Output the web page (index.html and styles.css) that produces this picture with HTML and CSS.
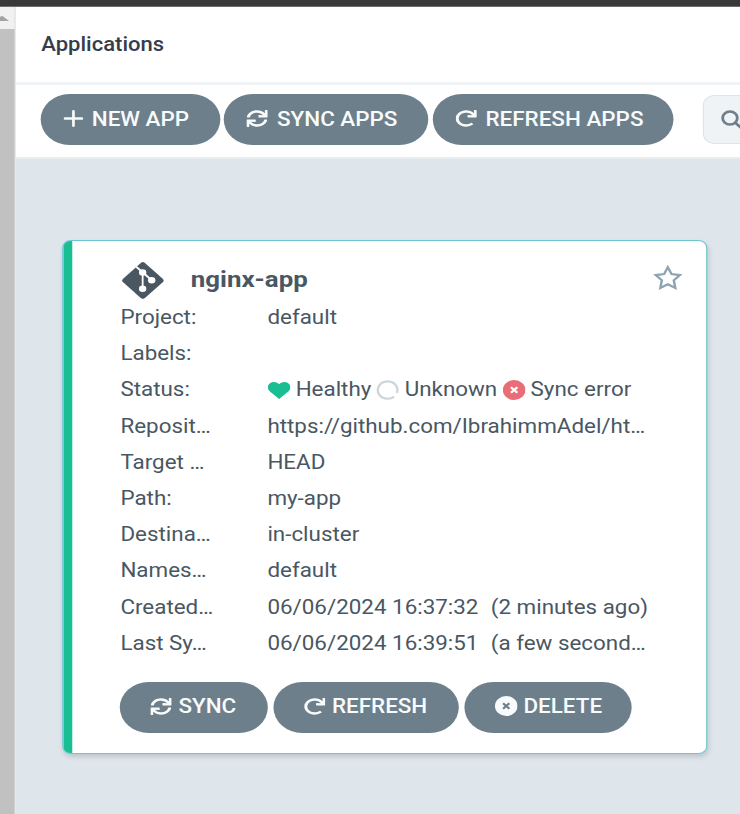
FILE: index.html
```html
<!DOCTYPE html>
<html lang="en">
<head>
<meta charset="utf-8">
<title>Applications</title>
<link rel="stylesheet" href="styles.css">
</head>
<body>
<svg class="defs" aria-hidden="true">
  <symbol id="sync" viewBox="0 0 512 512" preserveAspectRatio="none"><path d="M440.65 12.57l4 82.77A247.16 247.16 0 0 0 255.83 8C134.73 8 33.91 94.92 12.29 209.82A12 12 0 0 0 24.09 224h49.05a12 12 0 0 0 11.67-9.26 175.91 175.91 0 0 1 317-56.94l-101.46-4.86a12 12 0 0 0-12.57 12v47.41a12 12 0 0 0 12 12H500a12 12 0 0 0 12-12V12a12 12 0 0 0-12-12h-47.37a12 12 0 0 0-11.98 12.57zM255.83 432a175.61 175.61 0 0 1-146-77.8l101.8 4.87a12 12 0 0 0 12.57-12v-47.4a12 12 0 0 0-12-12H12a12 12 0 0 0-12 12V500a12 12 0 0 0 12 12h47.35a12 12 0 0 0 12-12.6l-4.15-82.57A247.17 247.17 0 0 0 255.83 504c121.11 0 221.93-86.92 243.55-201.82a12 12 0 0 0-11.8-14.18h-49.05a12 12 0 0 0-11.67 9.26A175.86 175.86 0 0 1 255.83 432z"/></symbol>
  <symbol id="redo" viewBox="0 0 512 512" preserveAspectRatio="none"><path d="M500.33 0h-47.41a12 12 0 0 0-12 12.57l4 82.76A247.42 247.42 0 0 0 256 8C119.34 8 7.9 119.53 8 256.19 8.1 393.07 119.1 504 256 504a247.1 247.1 0 0 0 166.18-63.91 12 12 0 0 0 .48-17.43l-34-34a12 12 0 0 0-16.38-.55A176 176 0 1 1 402.1 157.8l-101.53-4.87a12 12 0 0 0-12.57 12v47.41a12 12 0 0 0 12 12h200.33a12 12 0 0 0 12-12V12a12 12 0 0 0-12-12z"/></symbol>
  <symbol id="cross" viewBox="0 0 20 20"><circle cx="10" cy="10" r="10"/><path class="cross-mark" d="M7.200 7.200l5.600 5.600M12.800 7.200l-5.600 5.600"/></symbol>
</svg>
<div class="screen">
  <div class="window-edge"></div>
  <div class="frame">
    <div class="scrollbar"><div class="scroll-up"></div></div>
    <main class="main">
      <header class="header">Applications</header>
      <div class="toolbar">
        <button class="btn btn-new"><svg class="icon" viewBox="0 0 17 17"><path class="plus" d="M8.500 1.200v14.600M1 8.500h15"/></svg>NEW APP</button>
        <button class="btn btn-sync-all"><svg class="icon"><use href="#sync"/></svg>SYNC APPS</button>
        <button class="btn btn-refresh-all"><svg class="icon"><use href="#redo"/></svg>REFRESH APPS</button>
        <div class="search"><svg viewBox="0 0 20 20"><circle cx="8" cy="8" r="6.5"/><path d="M12.6 12.6l5.6 5.6"/></svg></div>
      </div>
      <section class="content">
        <article class="card">
          <div class="title-row">
            <svg class="git" viewBox="0 0 42 37" preserveAspectRatio="none">
              <path d="M18.800.900Q20.900-.7 23 .900L40.900 16.700Q42.900 18.500 40.900 20.300L23 36.100Q20.900 37.700 18.800 36.100L1.100 20.300Q-.9 18.500 1.100 16.700z"/>
              <path class="branch" d="M14.200 4.800L20.700 10.300 29.800 18.300M20.700 10.300V26.500"/>
              <g class="node"><ellipse cx="20.700" cy="10.500" rx="3.700" ry="3.200"/><ellipse cx="29.800" cy="18.300" rx="3.700" ry="3.200"/><ellipse cx="20.700" cy="26.700" rx="3.700" ry="3.200"/></g>
            </svg>
            <h2 class="name">nginx-app</h2>
            <svg class="star" viewBox="0 0 26 25"><path d="M13 2.2l3.3 6.900 7.400 1-5.400 5.200 1.300 7.600-6.600-3.600-6.600 3.600 1.300-7.600-5.400-5.200 7.400-1z"/></svg>
          </div>
          <dl class="rows">
            <dt>Project:</dt><dd>default</dd>
            <dt>Labels:</dt><dd></dd>
            <dt>Status:</dt>
            <dd class="status">
              <svg class="heart" viewBox="0 0 20 17"><path d="M10 17L1.6 9.2C-.6 7-.5 3.2 1.7 1.4 4.200-.7 7.600-.3 10 2.300 12.400-.3 15.800-.7 18.300 1.400 20.500 3.200 20.600 7 18.400 9.200z"/></svg><span>Healthy</span>
              <svg class="round" viewBox="0 0 20 20"><path class="ring" d="M15.700 16.600A8.700 8.700 0 1 1 18.200 13M15.700 16.600A8.700 8.700 0 0 1 12.600 18.300"/></svg><span>Unknown</span>
              <svg class="round error"><use href="#cross"/></svg><span>Sync error</span>
            </dd>
            <dt>Reposit…</dt><dd>https://github.com/IbrahimmAdel/ht…</dd>
            <dt>Target …</dt><dd>HEAD</dd>
            <dt>Path:</dt><dd>my-app</dd>
            <dt>Destina…</dt><dd>in-cluster</dd>
            <dt>Names…</dt><dd>default</dd>
            <dt>Created…</dt><dd>06/06/2024 16:37:32 <span class="ago">(2 minutes ago)</span></dd>
            <dt>Last Sy…</dt><dd>06/06/2024 16:39:51 <span class="ago">(a few second…</span></dd>
          </dl>
          <div class="actions">
            <button class="btn btn-sync"><svg class="icon"><use href="#sync"/></svg>SYNC</button>
            <button class="btn btn-refresh"><svg class="icon"><use href="#redo"/></svg>REFRESH</button>
            <button class="btn btn-delete"><svg class="icon delete-icon"><use href="#cross"/></svg>DELETE</button>
          </div>
        </article>
      </section>
    </main>
  </div>
</div>
</body>
</html>
```
FILE: styles.css
```css
* { box-sizing: border-box; }

body {
  margin: 0;
  height: 814px;
  overflow: hidden;
  font-family: Roboto, "Liberation Sans", sans-serif;
}

.defs { position: absolute; width: 0; height: 0; }

/* The whole interface is drawn 13% wider than its natural proportions. */
.screen {
  --k: 1.13;
  width: calc(740px / var(--k));
  height: 814px;
  display: flex;
  flex-direction: column;
  transform: scaleX(var(--k));
  transform-origin: 0 0;
  overflow: hidden;
  background: #fff;
  color: #495763;
}

.window-edge { height: 7px; flex: none; background: #3a3939; border-bottom: 1px solid #6e6c6c; }
.frame { flex: 1; display: flex; min-height: 0; }

.scrollbar {
  flex: none;
  width: calc(15.3px / var(--k));
  background: #c1c1c1;
  border-right: calc(1.3px / var(--k)) solid #edf0f2;
}
.scroll-up { height: 22px; background: #f1f1f1; padding-top: 9px; }
.scroll-up::before {
  content: "";
  display: block;
  width: calc(9px / var(--k));
  height: 5px;
  background: #a3a3a3;
  clip-path: polygon(0 15%, 28% 0, 100% 100%, 0 100%);
}

.main { flex: 1; min-width: 0; display: flex; flex-direction: column; }

.header {
  height: 78px;
  flex: none;
  padding-left: calc(26px / var(--k));
  border-bottom: 3px solid #eff3f5;
  line-height: 75px;
  font-size: 19.5px;
  font-weight: 500;
  color: #363c4a;
}

.toolbar {
  height: 74px;
  flex: none;
  display: flex;
  align-items: flex-start;
  gap: calc(4px / var(--k));
  padding: 9px 0 0 calc(25.7px / var(--k));
  border-bottom: 2px solid #e9eef1;
}

.btn {
  flex: none;
  display: flex;
  align-items: center;
  height: 51px;
  border: 0;
  border-radius: 25.5px;
  padding: 0 0 1px calc(22.5px / var(--k));
  background: #6d7f8b;
  color: #f8fbfb;
  font: 500 19.85px Roboto, "Liberation Sans", sans-serif;
  white-space: nowrap;
}
.icon { width: 19px; height: 17px; margin: 0 8px 1px 0; fill: currentColor; flex: none; }
.plus { fill: none; stroke: currentColor; stroke-width: 2.4; stroke-linecap: round; }
.btn-new { width: calc(179px / var(--k)); }
.btn-new .icon { width: 18px; margin-right: 7px; }
.btn-sync-all { width: calc(204.5px / var(--k)); }
.btn-refresh-all { width: calc(241.5px / var(--k)); }

.search {
  flex: none;
  width: calc(80px / var(--k));
  height: 49px;
  margin: 1px 0 0 calc(24.5px / var(--k));
  padding: 14px 0 0 calc(17px / var(--k));
  border: 1.5px solid #dde5ea;
  border-radius: 10px;
  background: #eff3f6;
}
.search svg { display: block; width: 20px; height: 20px; fill: none; stroke: #6d7f8b; stroke-width: 2.5; }

.content {
  flex: 1;
  background: #dee5eb;
  padding: 81px 0 0 calc(46.7px / var(--k));
}

.card {
  width: calc(645.5px / var(--k));
  height: 514px;
  border: 1.5px solid #6cc6d3;
  border-radius: 8px;
  background: linear-gradient(to right, #1abe93 calc(8.5px / var(--k)), #fff calc(8.5px / var(--k)));
  box-shadow: 1px 3px 4px rgba(100, 115, 120, .25);
  padding: 21px 0 0 calc(57.3px / var(--k));
}

.title-row { display: flex; height: 38px; align-items: center; }
.git { width: 37px; height: 37px; margin: 0 0 1px 1px; fill: #495763; }
.branch { fill: none; stroke: #fff; stroke-width: 1.8; }
.node { fill: #fff; }
.name {
  flex: 1;
  margin: 0 0 2px calc(27.5px / var(--k));
  font-size: 22.9px;
  font-weight: 700;
  line-height: 30px;
}
.star {
  width: 26px;
  height: 25px;
  margin: 0 calc(23.5px / var(--k)) 6.5px 0;
  fill: none;
  stroke: #8fa4b1;
  stroke-width: 2.2;
}

.rows {
  display: grid;
  grid-template-columns: calc(147px / var(--k)) 1fr;
  grid-auto-rows: 36.2px;
  margin: 0;
  font-size: 19.82px;
  line-height: 36.4px;
  white-space: nowrap;
}
.rows dd { margin: 0; }
.ago { margin-left: 6px; }

.status { display: flex; align-items: center; }
.heart { width: 20px; height: 17px; margin-right: 5px; fill: #1abe93; }
.round { width: 20px; height: 20px; margin: 0 4.7px 0 4.8px; }
.ring { fill: none; stroke: #ccd6dd; stroke-width: 2.2; }
.error { fill: #e96d76; color: #fff; }
.cross-mark { stroke: var(--mark, #fff); stroke-width: 2; }

.actions { display: flex; gap: calc(5.5px / var(--k)); margin-top: 20px; margin-left: -0.6px; }
.actions .btn { padding-left: calc(31px / var(--k)); }
.actions .icon { margin-right: 5.5px; }
.btn-sync { width: calc(148px / var(--k)); }
.btn-refresh { width: calc(185.5px / var(--k)); }
.btn-delete { width: calc(168px / var(--k)); }
.actions .delete-icon { width: 20px; height: 20px; margin-right: 5px; }
.delete-icon { --mark: #6d7f8b; }
```
